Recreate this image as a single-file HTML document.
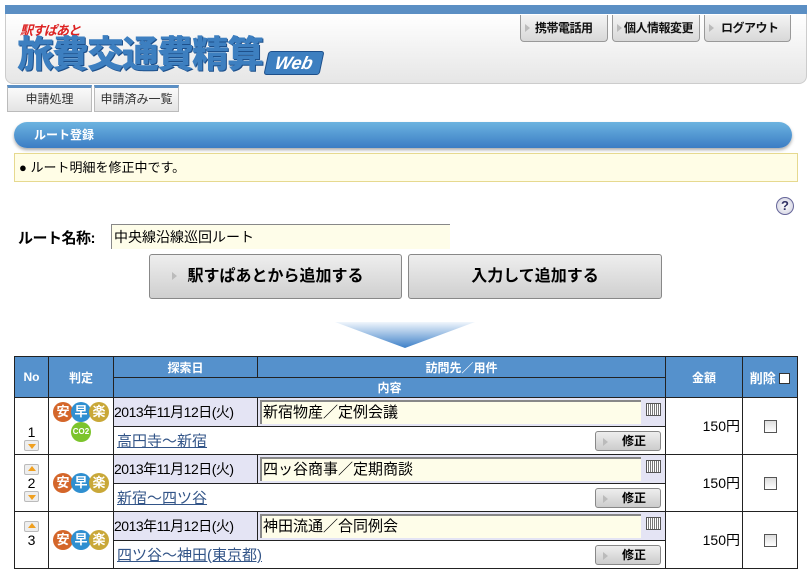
<!DOCTYPE html>
<html><head><meta charset="utf-8"><style>
*{margin:0;padding:0;box-sizing:border-box}
body{width:812px;height:575px;position:relative;background:#fff;font-family:"Liberation Sans","Noto Sans CJK JP",sans-serif;font-size:13px;color:#000;overflow:hidden}
.a{position:absolute}
.tb{position:absolute;top:15px;height:27px;border:1px solid #999;border-top:none;border-radius:0 0 4px 4px;background:linear-gradient(#f4f4f4,#d8d8d8);font-size:12px;font-weight:bold;line-height:26px;padding-left:14px;color:#111;white-space:nowrap;letter-spacing:-0.5px;overflow:hidden}
.tb:before{content:"";position:absolute;left:4px;top:9px;border-left:5px solid #bbb;border-top:4px solid transparent;border-bottom:4px solid transparent}
.tab{position:absolute;top:85px;height:27px;border:1px solid #bbb;border-top:3px solid #5b8fc4;background:linear-gradient(#fafafa,#e4e4e4);font-size:12px;line-height:22px;text-align:center;color:#333}
.btn{position:absolute;top:254px;height:45px;border:1px solid #888;border-radius:3px;background:linear-gradient(#eee,#cfcfcf);font-size:16px;font-weight:bold;line-height:43px;text-align:center}
table{position:absolute;left:14px;top:356px;border-collapse:collapse;width:784px}
td,th{border:1px solid #222;padding:0}
th{background:#5591cc;color:#fff;font-size:12px;font-weight:bold;height:21px}
.dt{background:#e4e4f4;font-size:14px;white-space:nowrap;height:29px;letter-spacing:-0.5px}
.vi{background:#e4e4f4;position:relative}
.inp{position:absolute;left:2px;top:2px;right:24px;height:24px;background:#fefde9;border-top:2px solid #888;border-left:2px solid #888;font-size:15px;line-height:22px;padding-left:1px}
.cal{position:absolute;right:4px;top:5px;width:15px;height:13px;border:1px solid #555;background:repeating-linear-gradient(90deg,#fff 0 1px,#777 1px 2px)}
.rt{height:27px;position:relative}
.rt a{color:#335588;text-decoration:underline;font-size:15px;position:absolute;left:3px;top:3px}
.fix{position:absolute;right:4px;top:4px;width:66px;height:20px;border:1px solid #888;border-radius:3px;background:linear-gradient(#eee,#ccc);font-size:12px;font-weight:bold;line-height:19px;text-align:right;padding-right:14px}
.fix:before{content:"";position:absolute;left:7px;top:6px;border-left:5px solid #bbb;border-top:4px solid transparent;border-bottom:4px solid transparent}
.no{text-align:center;font-size:14px;position:relative}
.ar{display:block;margin:0 auto;width:15px;height:11px;border:1px solid #bbb;border-radius:2px;background:#eee;position:relative}
.ar i{position:absolute;left:3px;width:0;height:0;border-left:4px solid transparent;border-right:4px solid transparent}
.dn i{top:3px;border-top:5px solid #f0a020}
.up i{top:1px;border-bottom:5px solid #f0a020}
.ic{display:inline-block;width:20px;height:20px;border-radius:50%;color:#fff;font-size:13px;font-weight:bold;line-height:20px;text-align:center;margin:0 -1px}
.amt{text-align:right;padding-right:2px;font-size:14px}
.cb{display:block;margin:0 auto;width:13px;height:13px;border:1px solid #555;background:linear-gradient(#ddd,#fff)}
</style></head><body>
<div class="a" style="left:5px;top:5px;width:802px;height:9px;background:#5b8fc4"></div>
<div class="a" style="left:5px;top:14px;width:802px;height:70px;background:linear-gradient(#fff,#e6e6e6);border:1px solid #ccc;border-top:none;border-radius:0 0 8px 8px"></div>
<div class="a" style="left:20px;top:20px;color:#d22;font-size:13px;font-style:italic;font-weight:bold;letter-spacing:-1px">駅すぱあと</div>
<div class="a" style="left:17px;top:33px;color:#3d7fc0;font-size:37px;font-weight:900;letter-spacing:-2px;line-height:44px;text-shadow:1px 1px 0 #1d4f8a">旅費交通費精算</div>
<div class="a" style="left:266px;top:51px;width:56px;height:24px;background:#3d7fc0;border:1px solid #1d4f8a;transform:skewX(-12deg);border-radius:3px;color:#fff;font-size:18px;font-weight:bold;font-style:italic;text-align:center;line-height:22px">Web</div>
<div class="tb" style="left:520px;width:88px">携帯電話用</div>
<div class="tb" style="left:612px;width:88px;padding-left:11px">個人情報変更</div>
<div class="tb" style="left:704px;width:87px;padding-left:16px">ログアウト</div>
<div class="tab" style="left:7px;width:85px">申請処理</div>
<div class="tab" style="left:94px;width:85px">申請済み一覧</div>
<div class="a" style="left:14px;top:122px;width:778px;height:26px;border-radius:13px;background:linear-gradient(#6cb3e0,#3b7dc4);box-shadow:0 2px 3px #aaa;color:#fff;font-size:12px;font-weight:bold;line-height:26px;padding-left:20px">ルート登録</div>
<div class="a" style="left:14px;top:153px;width:784px;height:29px;background:#fffde6;border:1px solid #e6d98f;font-size:13px;line-height:27px;padding-left:4px">● ルート明細を修正中です。</div>
<div class="a" style="left:776px;top:197px;width:18px;height:18px;border-radius:50%;border:1px solid #669;background:radial-gradient(#fff,#ccd);color:#336;font-size:13px;font-weight:bold;text-align:center;line-height:16px">?</div>
<div class="a" style="left:18px;top:227px;font-size:15px;font-weight:bold;letter-spacing:-0.5px">ルート名称:</div>
<div class="a" style="left:111px;top:224px;width:339px;height:25px;background:#fefde9;border-top:1px solid #888;border-left:1px solid #888;font-size:14px;line-height:24px;padding-left:2px">中央線沿線巡回ルート</div>
<div class="btn" style="left:149px;width:253px"><span style="position:absolute;left:22px;top:17px;border-left:5px solid #bbb;border-top:4px solid transparent;border-bottom:4px solid transparent"></span>駅すぱあとから追加する</div>
<div class="btn" style="left:408px;width:254px">入力して追加する</div>
<div class="a" style="left:335px;top:322px;width:140px;height:26px;background:linear-gradient(#f0f6fc,#3d80c8);clip-path:polygon(0 0,100% 0,50% 100%)"></div>
<table>
<tr><th rowspan="2" style="width:34px">No</th><th rowspan="2" style="width:65px">判定</th><th style="width:144px">探索日</th><th style="width:408px">訪問先／用件</th><th rowspan="2" style="width:77px">金額</th><th rowspan="2" style="font-size:13px">削除 <span style="display:inline-block;width:11px;height:11px;background:#fff;border:1px solid #333;vertical-align:-1px"></span></th></tr>
<tr><th colspan="2" style="height:20px">内容</th></tr>

<tr><td rowspan="2" class="no"><div style="margin-top:22px">1</div><span class="ar dn"><i></i></span></td>
<td rowspan="2" style="text-align:center;vertical-align:top;padding-top:4px"><span class="ic" style="background:#d4662a">安</span><span class="ic" style="background:#2f8fd0">早</span><span class="ic" style="background:#c9a838">楽</span><br><span class="ic" style="background:#7cc42c;font-size:8px;margin-top:0">CO2</span></td>
<td class="dt">2013年11月12日(火)</td><td class="vi"><div class="inp">新宿物産／定例会議</div><div class="cal"></div></td>
<td rowspan="2" class="amt">150円</td><td rowspan="2"><span class="cb"></span></td></tr>
<tr><td colspan="2"><div class="rt"><a>高円寺～新宿</a><div class="fix">修正</div></div></td></tr>

<tr><td rowspan="2" class="no"><span class="ar up"><i></i></span><div>2</div><span class="ar dn"><i></i></span></td>
<td rowspan="2" style="text-align:center"><span class="ic" style="background:#d4662a">安</span><span class="ic" style="background:#2f8fd0">早</span><span class="ic" style="background:#c9a838">楽</span></td>
<td class="dt">2013年11月12日(火)</td><td class="vi"><div class="inp">四ッ谷商事／定期商談</div><div class="cal"></div></td>
<td rowspan="2" class="amt">150円</td><td rowspan="2"><span class="cb"></span></td></tr>
<tr><td colspan="2"><div class="rt"><a>新宿～四ツ谷</a><div class="fix">修正</div></div></td></tr>

<tr><td rowspan="2" class="no"><span class="ar up"><i></i></span><div>3</div><div style="height:12px"></div></td>
<td rowspan="2" style="text-align:center"><span class="ic" style="background:#d4662a">安</span><span class="ic" style="background:#2f8fd0">早</span><span class="ic" style="background:#c9a838">楽</span></td>
<td class="dt">2013年11月12日(火)</td><td class="vi"><div class="inp">神田流通／合同例会</div><div class="cal"></div></td>
<td rowspan="2" class="amt">150円</td><td rowspan="2"><span class="cb"></span></td></tr>
<tr><td colspan="2"><div class="rt"><a>四ツ谷～神田(東京都)</a><div class="fix">修正</div></div></td></tr>
</table>
</body></html>
